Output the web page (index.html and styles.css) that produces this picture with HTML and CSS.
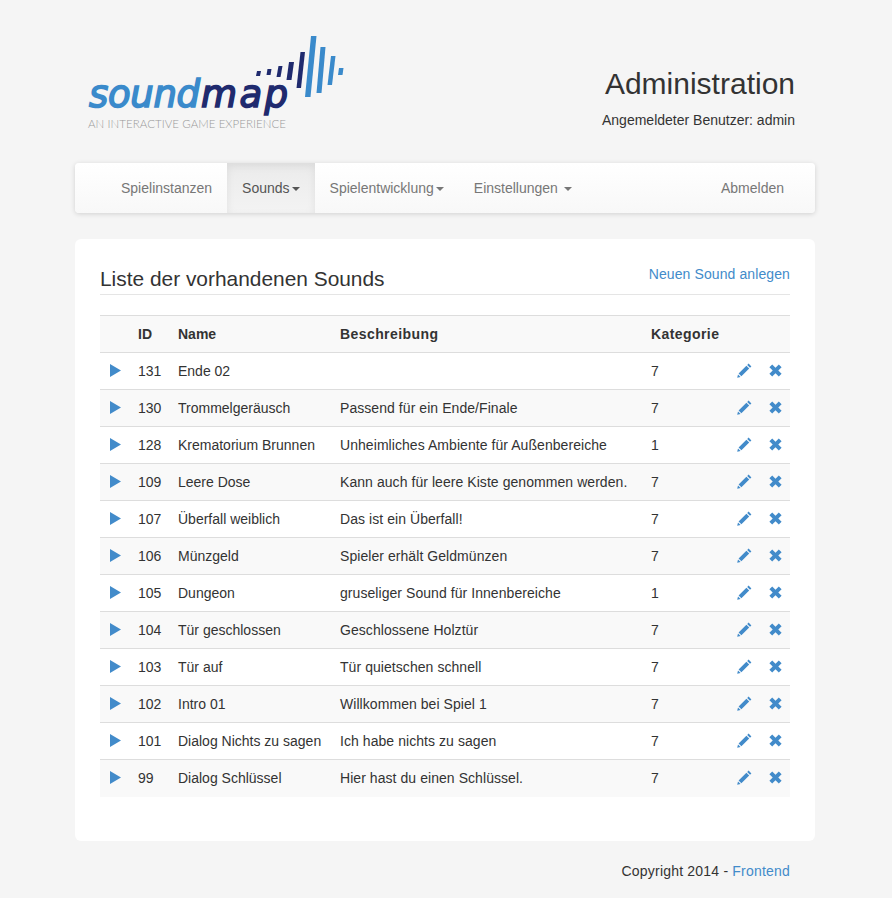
FILE: index.html
```html
<!DOCTYPE html>
<html lang="en">
<head>
    <meta charset="UTF-8">
    <meta name="viewport" content="width=device-width, initial-scale=1.0">
    <title>Administration</title>
    <link rel="stylesheet" href="styles.css">
</head>
<body>
    <svg width="0" height="0" class="defs">
        <symbol id="i-play" viewBox="0 0 11 13"><path d="M0 0 L11 6.500 L0 13 Z"/></symbol>
        <symbol id="i-pencil" viewBox="0 0 15 15"><path d="M11.600 0.600 L14.400 3.400 L13 4.800 L10.200 2 Z M9.400 2.800 L12.200 5.600 L4.400 13.200 L1.600 10.600 Z M1 11.400 L3.600 14 L0.200 14.800 Z"/></symbol>
        <symbol id="i-remove" viewBox="0 0 13 13"><path d="M3.200 0.400 L6.500 3.700 L9.800 0.400 L12.600 3.200 L9.300 6.500 L12.600 9.800 L9.800 12.600 L6.500 9.300 L3.200 12.600 L0.400 9.800 L3.700 6.500 L0.400 3.200 Z"/></symbol>
    </svg>

    <div class="container">
        <header class="page-head">
            <svg class="logo" width="290" height="115" viewBox="0 0 290 115">
                <g class="bars-dark">
                    <polygon points="181,51 185,51 186,46 182,46"/>
                    <polygon points="191.500,50 195.500,50 196.500,44 192.500,44"/>
                    <polygon points="201.500,52 205.500,52 207.500,41 203.500,41"/>
                    <polygon points="211.500,55 216.500,55 219,37 214,37"/>
                    <polygon points="221.500,63 226,63 230,27 225.500,27"/>
                </g>
                <g class="bars-light">
                    <polygon points="230,72 235.500,72 241.500,11 236,11"/>
                    <polygon points="241.500,68 246.500,68 250.500,22 245.500,22"/>
                    <polygon points="252.500,60 257,60 260.500,31 256,31"/>
                    <polygon points="263,50 267.500,50 268.500,43 264,43"/>
                </g>
                <text class="logo-word logo-sound" x="14" y="82" textLength="111">sound</text>
                <text class="logo-word logo-map" x="126" y="82" textLength="87">map</text>
                <text class="logo-tag" x="13" y="103" textLength="198">AN INTERACTIVE GAME EXPERIENCE</text>
            </svg>
            <div class="head-right">
                <h1>Administration</h1>
                <p>Angemeldeter Benutzer: admin</p>
            </div>
        </header>

        <nav class="navbar">
            <ul class="nav-left">
                <li><a href="#">Spielinstanzen</a></li>
                <li class="active"><a href="#">Sounds<b class="caret"></b></a></li>
                <li><a href="#">Spielentwicklung<b class="caret"></b></a></li>
                <li><a href="#">Einstellungen <b class="caret"></b></a></li>
            </ul>
            <ul class="nav-right">
                <li><a href="#">Abmelden</a></li>
            </ul>
        </nav>

        <main class="panel">
            <div class="panel-head">
                <h2>Liste der vorhandenen Sounds</h2>
                <a href="#">Neuen Sound anlegen</a>
            </div>
            <table class="sounds">
                <thead>
                    <tr>
                        <th class="c-play"></th>
                        <th class="c-id">ID</th>
                        <th class="c-name">Name</th>
                        <th class="c-desc">Beschreibung</th>
                        <th class="c-cat">Kategorie</th>
                        <th class="c-act"></th>
                    </tr>
                </thead>
                <tbody id="rows"></tbody>
            </table>
        </main>

        <footer class="page-foot">Copyright 2014 - <a href="#">Frontend</a></footer>
    </div>

    <script>
        var sounds = [
            [131, 'Ende 02', '', 7],
            [130, 'Trommelgeräusch', 'Passend für ein Ende/Finale', 7],
            [128, 'Krematorium Brunnen', 'Unheimliches Ambiente für Außenbereiche', 1],
            [109, 'Leere Dose', 'Kann auch für leere Kiste genommen werden.', 7],
            [107, 'Überfall weiblich', 'Das ist ein Überfall!', 7],
            [106, 'Münzgeld', 'Spieler erhält Geldmünzen', 7],
            [105, 'Dungeon', 'gruseliger Sound für Innenbereiche', 1],
            [104, 'Tür geschlossen', 'Geschlossene Holztür', 7],
            [103, 'Tür auf', 'Tür quietschen schnell', 7],
            [102, 'Intro 01', 'Willkommen bei Spiel 1', 7],
            [101, 'Dialog Nichts zu sagen', 'Ich habe nichts zu sagen', 7],
            [99, 'Dialog Schlüssel', 'Hier hast du einen Schlüssel.', 7]
        ];
        var html = '';
        sounds.forEach(function (s) {
            html += '<tr>' +
                '<td><svg class="ic ic-play"><use href="#i-play"/></svg></td>' +
                '<td>' + s[0] + '</td><td>' + s[1] + '</td><td>' + s[2] + '</td><td>' + s[3] + '</td>' +
                '<td class="actions"><div class="act-icons"><svg class="ic ic-pencil"><use href="#i-pencil"/></svg>' +
                '<svg class="ic ic-remove"><use href="#i-remove"/></svg></div></td>' +
                '</tr>';
        });
        document.getElementById('rows').innerHTML = html;
    </script>
</body>
</html>
```

FILE: styles.css
```css
* {
    box-sizing: border-box;
}
body {
    margin: 0;
    background-color: #f5f5f5;
    color: #333;
    font-family: "Liberation Sans", Arial, sans-serif;
    font-size: 14px;
    line-height: 20px;
}
a {
    color: #428bca;
    text-decoration: none;
}
.defs {
    position: absolute;
}
.container {
    width: 740px;
    margin-left: 75px;
}

.page-head {
    display: flex;
    justify-content: space-between;
    height: 163px;
    padding-top: 25px;
}
.logo {
    display: block;
}
.bars-dark {
    fill: #1f2a6e;
}
.bars-light {
    fill: #3a8acb;
}
.logo-word {
    font-family: "DejaVu Sans", sans-serif;
    font-size: 37px;
    font-style: italic;
    stroke-width: 1.600px;
}
.logo-sound {
    fill: #3a8acb;
    stroke: #3a8acb;
}
.logo-map {
    fill: #1f2a6e;
    stroke: #1f2a6e;
}
.logo-tag {
    font-family: Lato, sans-serif;
    font-size: 11.500px;
    font-weight: 300;
    fill: #999;
}
.head-right {
    text-align: right;
    padding: 17px 20px 0 0;
}
.head-right h1 {
    margin: 25px 0 10px;
    font-size: 30px;
    font-weight: 400;
    line-height: 33px;
}
.head-right p {
    margin: 0;
}

.navbar {
    display: flex;
    justify-content: space-between;
    height: 50px;
    padding: 0 16px 0 31px;
    border-radius: 4px;
    background-image: linear-gradient(to bottom, #fff 0%, #f8f8f8 100%);
    box-shadow: inset 0 1px 0 rgba(255, 255, 255, 0.15), 0 1px 5px rgba(0, 0, 0, 0.15);
}
.navbar ul {
    display: flex;
    margin: 0;
    padding: 0;
    list-style: none;
}
.navbar a {
    display: block;
    padding: 15px;
    color: #777;
}
.navbar .active a {
    color: #555;
    background-image: linear-gradient(to bottom, #ebebeb 0%, #f3f3f3 100%);
    box-shadow: inset 0 3px 9px rgba(0, 0, 0, 0.075);
}
.caret {
    display: inline-block;
    width: 0;
    height: 0;
    margin-left: 2px;
    vertical-align: middle;
    border-top: 4px solid;
    border-right: 4px solid transparent;
    border-left: 4px solid transparent;
}

.panel {
    margin-top: 26px;
    height: 602px;
    padding: 22px 25px 0;
    border-radius: 6px;
    background-color: #fff;
}
.panel-head {
    display: flex;
    justify-content: space-between;
    height: 34px;
    border-bottom: 1px solid #e5e5e5;
}
.panel-head h2 {
    margin: 5px 0 0;
    font-size: 20.900px;
    font-weight: 400;
    line-height: 26px;
}
.panel-head a {
    margin-top: 3px;
    letter-spacing: 0.1px;
}

.sounds {
    width: 690px;
    margin-top: 20px;
    border-collapse: collapse;
    table-layout: fixed;
}
.c-play {
    width: 30px;
}
.c-id {
    width: 40px;
}
.c-name {
    width: 162px;
}
.c-desc {
    width: 311px;
}
.c-cat {
    width: 80px;
}
.sounds th,
.sounds td {
    height: 37px;
    padding: 8px;
    border-top: 1px solid #ddd;
    text-align: left;
    vertical-align: middle;
}
.sounds thead th {
    background-color: #f9f9f9;
    border-bottom: 1px solid #ddd;
}
.sounds thead .c-desc,
.sounds thead .c-cat {
    letter-spacing: 0.42px;
}
.sounds tbody td:nth-child(4) {
    letter-spacing: 0.06px;
}
.sounds tbody tr:nth-child(even) td {
    background-color: #f9f9f9;
}
.ic {
    display: block;
    fill: #428bca;
}
.ic-play {
    width: 11px;
    height: 13px;
    margin: -1px 0 0 2px;
}
.sounds td.actions {
    padding: 0 8px 2px 0;
}
.act-icons {
    display: flex;
    justify-content: flex-end;
    align-items: center;
}
.ic-pencil {
    width: 15px;
    height: 15px;
}
.ic-remove {
    width: 13px;
    height: 13px;
    margin-left: 17px;
}

.page-foot {
    padding: 20px 25px 0 0;
    text-align: right;
    letter-spacing: 0.2px;
}
```
